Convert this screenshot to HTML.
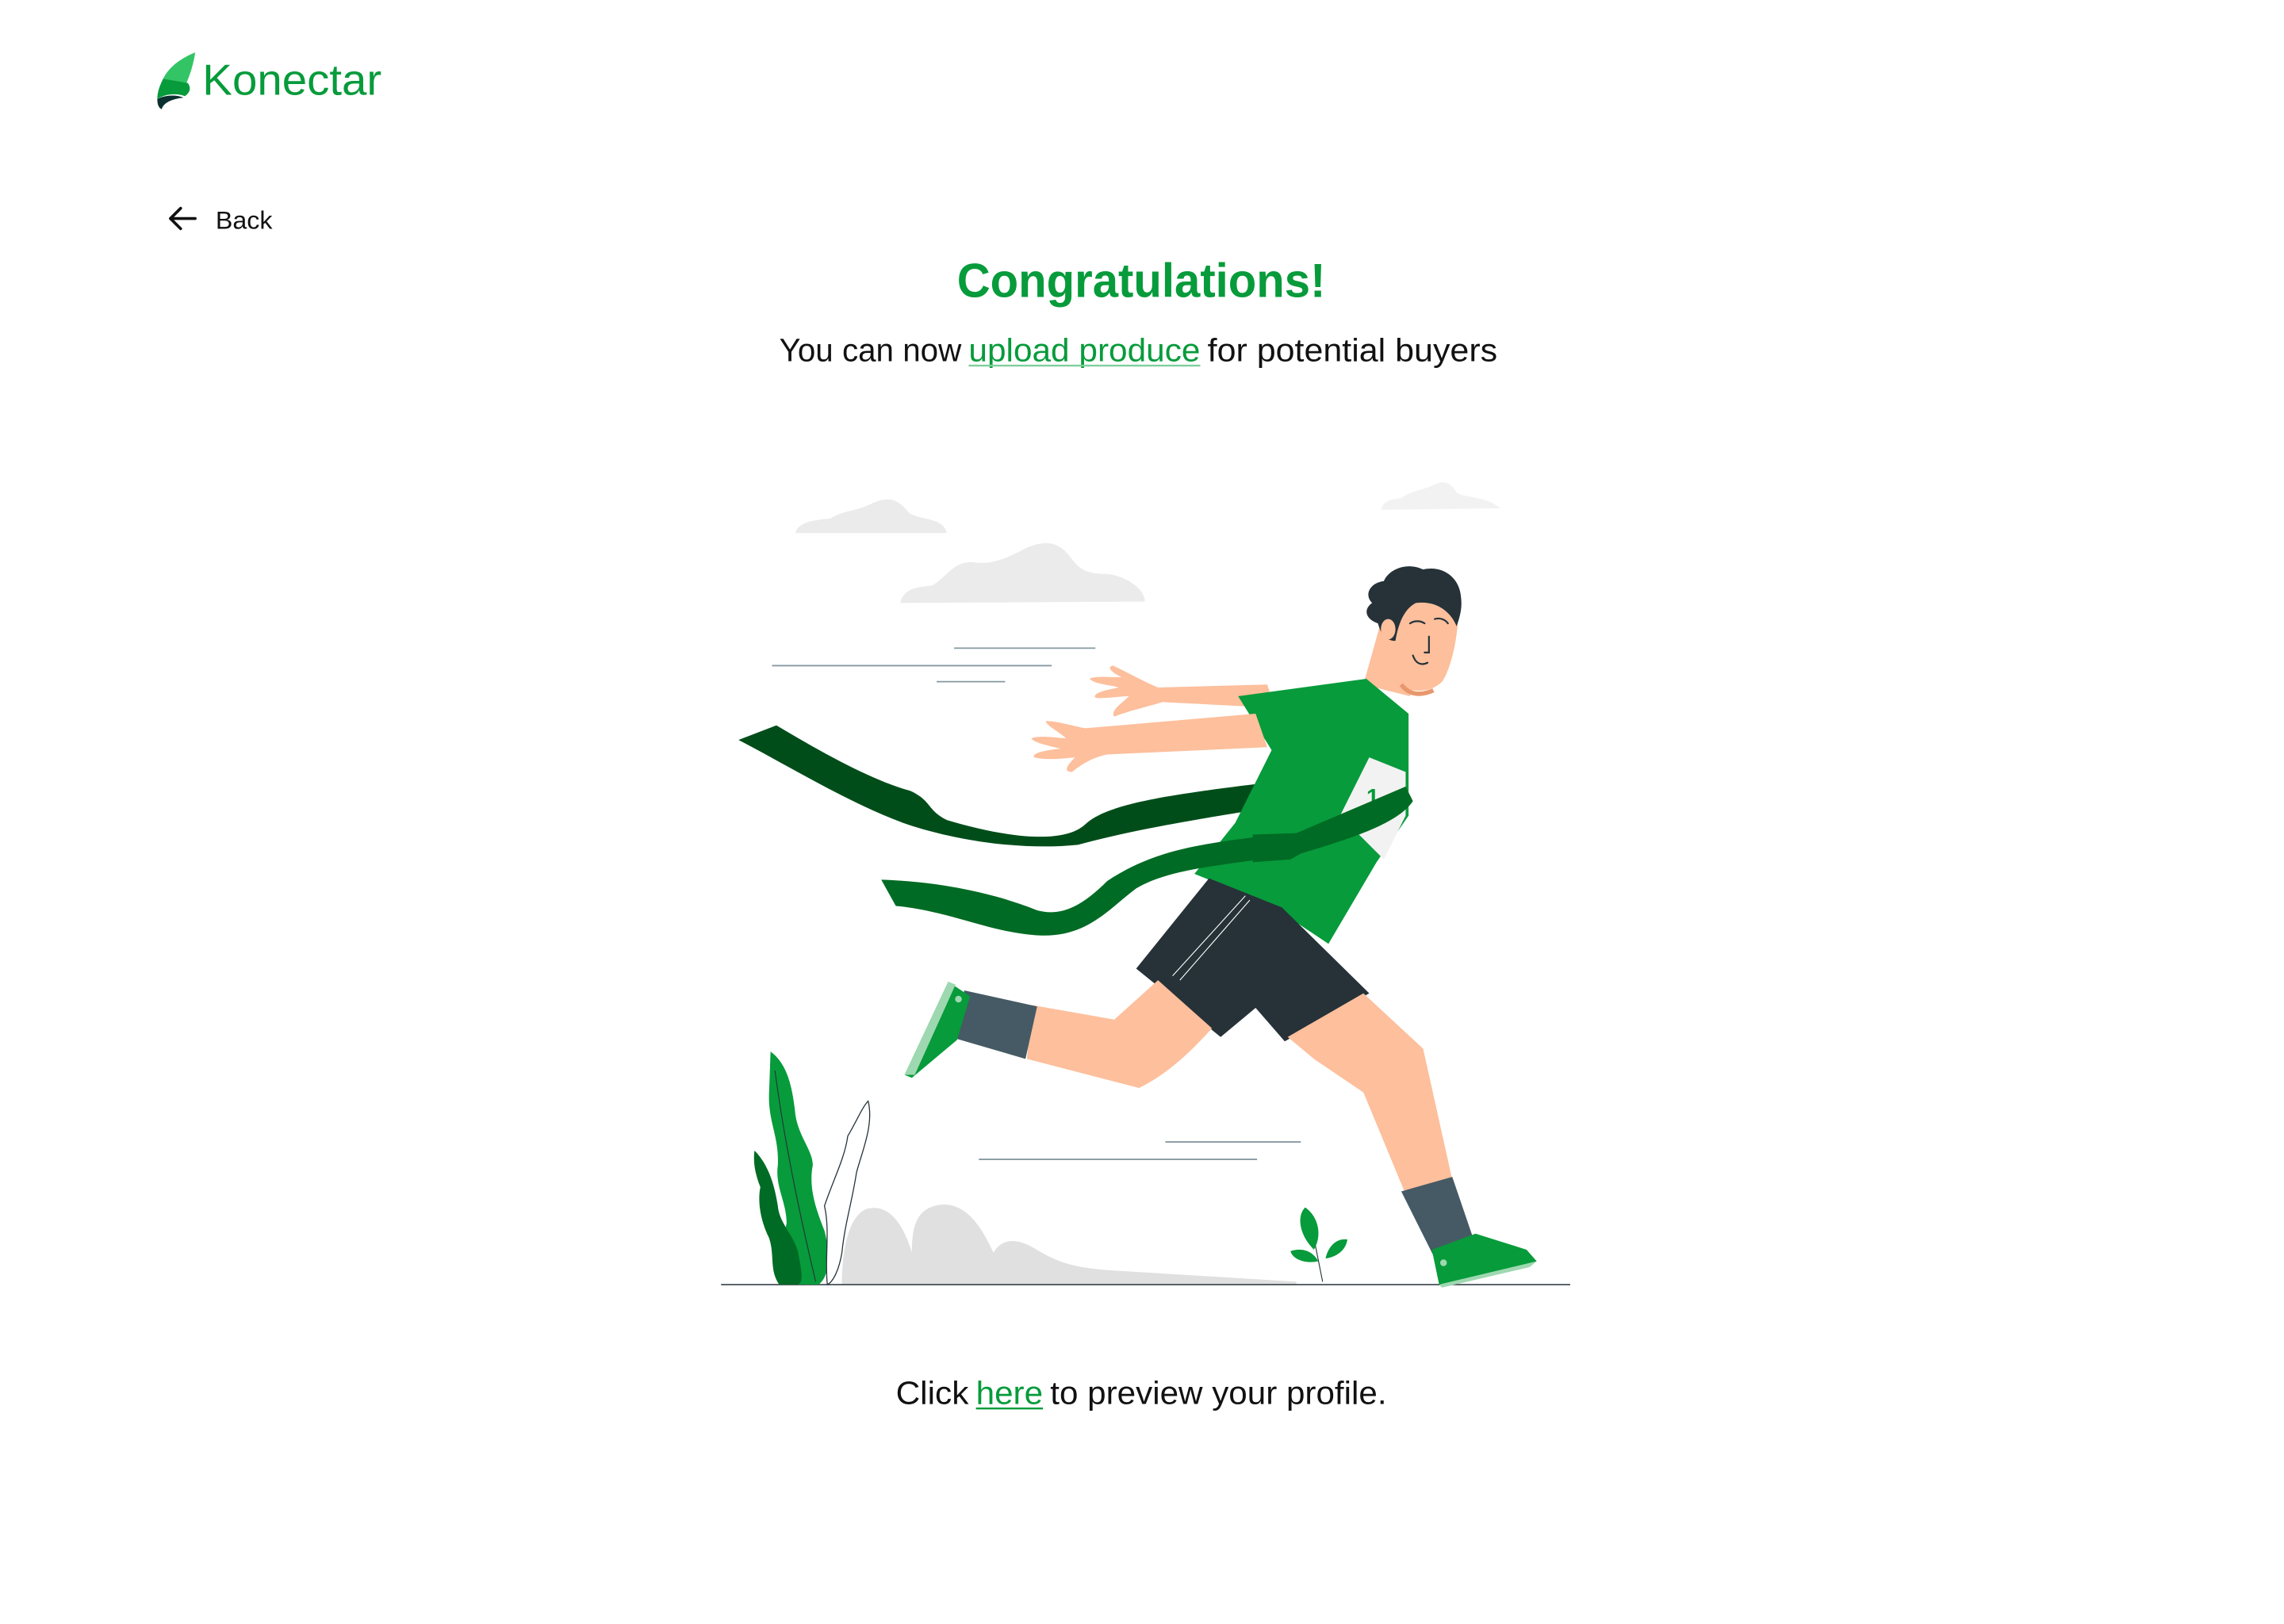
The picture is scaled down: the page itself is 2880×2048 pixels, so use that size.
<!DOCTYPE html>
<html><head><meta charset="utf-8"><style>
html,body{margin:0;padding:0;background:#fff;}
svg{display:block;}
</style></head><body>
<svg width="2880" height="2048" viewBox="0 0 1568 1115" xmlns="http://www.w3.org/2000/svg" font-family="Liberation Sans, sans-serif">
<!-- Logo -->
<path d="M134,36 C124,40 116,46 112,54 L128,57 C131,50 133,43 134,36Z" fill="#33c466"/>
<path d="M112,54 C109,60 108,64 108,68 C114,64 122,64 127,66 C131,63 131,60 129,57 Z" fill="#079b3b"/>
<path d="M108,68 C108,72 109,74 111,75 C112,71 117,68 126,67 C121,65 114,65 108,68Z" fill="#0b3030"/>
<text x="139" y="65" font-size="30" fill="#079b3b" textLength="123" lengthAdjust="spacingAndGlyphs">Konectar</text>
<!-- Back -->
<path d="M134,150 H117 M124,143 L117,150 L124,157" stroke="#111" stroke-width="2" fill="none" stroke-linecap="round" stroke-linejoin="round"/>
<text x="148" y="157" font-size="17" fill="#111" textLength="39" lengthAdjust="spacingAndGlyphs">Back</text>
<!-- Headings -->
<text x="657" y="204" font-size="33" font-weight="bold" fill="#079b3b" textLength="253" lengthAdjust="spacingAndGlyphs">Congratulations!</text>
<text x="535" y="248" font-size="22" fill="#111" textLength="125" lengthAdjust="spacingAndGlyphs">You can now</text>
<text x="665" y="248" font-size="22" fill="#079b3b" textLength="159" lengthAdjust="spacingAndGlyphs">upload produce</text>
<line x1="665" y1="251" x2="824" y2="251" stroke="#7fcf9c" stroke-width="1.3"/>
<text x="829" y="248" font-size="22" fill="#111" textLength="199" lengthAdjust="spacingAndGlyphs">for potential buyers</text>
<text x="615" y="964" font-size="22" fill="#111" textLength="50" lengthAdjust="spacingAndGlyphs">Click</text>
<text x="670" y="964" font-size="22" fill="#079b3b" textLength="46" lengthAdjust="spacingAndGlyphs">here</text>
<line x1="670" y1="967" x2="716" y2="967" stroke="#079b3b" stroke-width="1.3"/>
<text x="721" y="964" font-size="22" fill="#111" textLength="231" lengthAdjust="spacingAndGlyphs">to preview your profile.</text>

<!-- Clouds -->
<path d="M546,366 C548,358 560,357 570,356 C580,350 585,352 598,346 C610,340 617,343 624,352 C630,357 648,355 650,366Z" fill="#ebebeb"/>
<path d="M618,414 C620,404 630,403 640,402 C650,396 655,385 668,386 C680,388 690,384 705,376 C720,370 728,373 736,384 C742,392 748,394 760,394 C775,396 786,405 786,413Z" fill="#ebebeb"/>
<path d="M948,350 C950,343 956,343 962,342 C968,337 976,337 984,333 C992,329 996,332 1000,338 C1004,342 1020,340 1030,349Z" fill="#f2f2f2"/>
<!-- speed lines -->
<g stroke="#546e7a" stroke-width="1" opacity="0.7">
<line x1="655" y1="445" x2="752" y2="445"/><line x1="530" y1="457" x2="722" y2="457"/><line x1="643" y1="468" x2="690" y2="468"/>
<line x1="800" y1="784" x2="893" y2="784"/><line x1="672" y1="796" x2="863" y2="796"/></g>
<!-- ground -->
<path d="M578,882 C578,860 582,835 595,830 C610,826 620,840 626,860 C626,840 630,828 648,827 C665,827 675,845 682,860 C688,850 698,850 710,857 C725,866 735,870 760,872 L890,880 L890,882Z" fill="#e0e0e0"/>
<line x1="495" y1="882" x2="1078" y2="882" stroke="#263238" stroke-width="0.8"/>
<!-- left plant -->
<path d="M529,722 C540,730 544,745 546,765 C548,780 558,790 558,800 C555,815 560,830 566,845 C570,860 570,876 562,882 L548,882 C540,870 536,855 540,840 C540,825 532,815 534,800 C535,780 527,770 528,750 Z" fill="#079b3b"/>
<path d="M518,790 C528,800 532,815 534,828 C535,840 545,848 548,860 C550,872 552,880 548,882 L535,882 C528,872 532,862 528,850 C522,838 520,825 522,815 C518,805 517,797 518,790Z" fill="#006b24"/>
<path d="M532,735 C538,780 548,830 560,880" stroke="#263238" stroke-width="0.6" fill="none"/>
<path d="M596,756 C600,772 592,790 588,805 C585,825 580,840 578,860 C576,872 572,880 568,882 C566,865 570,845 566,828 C572,810 580,795 582,780 C588,770 592,760 596,756Z" fill="#fff" stroke="#263238" stroke-width="0.7"/>
<!-- right plant -->
<path d="M908,880 C905,865 902,850 900,840" stroke="#263238" stroke-width="0.6" fill="none"/>
<path d="M902,858 C892,848 890,835 896,829 C905,835 908,848 902,858Z" fill="#079b3b"/>
<path d="M905,866 C895,868 887,864 886,859 C895,856 902,860 905,866Z" fill="#079b3b"/>
<path d="M910,864 C912,855 918,850 925,851 C924,858 918,863 910,864Z" fill="#079b3b"/>
<!-- ribbon upper -->
<path d="M507,508 L533,498 C570,520 600,536 625,543 C640,550 636,556 650,563 C690,575 730,580 745,566 C760,552 800,546 865,538 L862,556 C800,566 770,572 740,580 C700,584 655,577 620,565 C580,550 540,525 507,508Z" fill="#004d1a"/>
<!-- back arm -->
<path d="M870,470 L795,472 C785,468 775,462 764,457 C760,458 762,461 770,465 C760,465 752,464 748,466 C752,470 762,470 768,472 C758,474 750,476 752,479 C758,480 768,478 775,478 C770,483 762,488 765,492 C775,488 785,486 798,482 L875,486Z" fill="#fdbf9c"/>
<!-- neck -->
<path d="M950,420 L980,440 L968,478 L936,470Z" fill="#fdbf9c"/>
<!-- shirt -->
<path d="M850,478 L938,466 L967,490 L967,560 L945,592 L912,648 L870,620 L820,600 L848,565 L873,515Z" fill="#079b3b"/>
<path d="M940,520 L965,530 L965,560 L950,590 L920,560Z" fill="#f2f2f2"/>
<text x="938" y="553" font-size="16" font-weight="bold" fill="#079b3b">1</text>
<!-- front arm -->
<path d="M870,513 L760,518 C750,520 742,525 736,530 C730,530 732,526 738,520 C728,521 718,522 710,520 C708,517 718,515 728,514 C720,512 710,510 708,507 C712,505 722,506 732,507 C728,503 718,498 718,495 C725,495 735,498 745,500 L862,490Z" fill="#fdbf9c"/>
<!-- head -->
<path d="M954,408 C966,400 990,402 1001,415 C1002,432 997,458 990,468 C982,476 968,476 960,470 C952,462 947,445 950,428Z" fill="#fdbf9c"/>
<path d="M962,470 C967,477 975,478 984,474" stroke="#e8976c" stroke-width="3" fill="none"/>
<path d="M946,428 C937,425 936,418 942,414 C936,408 941,400 950,399 C954,390 967,386 977,391 C990,388 1002,396 1003,410 C1004,418 1002,424 1000,430 C996,420 986,412 972,414 C964,418 960,428 958,440 C952,440 948,436 946,428Z" fill="#263238"/>
<ellipse cx="953" cy="432" rx="5" ry="7" fill="#fdbf9c"/>
<path d="M968,428 C971,426 975,426 978,428 M985,425 C988,424 992,425 994,428 M981,437 L981,448 L978,448 M970,450 C972,456 976,457 980,455" stroke="#263238" stroke-width="1.2" fill="none" stroke-linecap="round"/>
<!-- ribbon lower -->
<path d="M605,604 C640,605 680,612 712,625 C730,630 745,620 760,605 C790,585 820,580 860,575 L865,590 C830,595 800,598 780,610 C760,625 745,645 710,642 C680,640 650,625 615,622 Z" fill="#006b24"/>
<path d="M860,573 L890,572 L965,540 L970,550 C960,565 930,575 893,586 L886,590 L860,592Z" fill="#006b24"/>
<!-- shorts -->
<path d="M830,603 L880,623 L940,682 L882,715 L862,692 L838,712 L780,665Z" fill="#263238"/>
<path d="M805,670 L855,615 M810,673 L858,618" stroke="#fff" stroke-width="0.6"/>
<!-- back leg -->
<path d="M795,673 L832,706 C815,725 800,738 782,747 L705,727 L708,690 L765,700Z" fill="#fdbf9c"/>
<path d="M662,680 L712,691 L704,727 L656,713Z" fill="#455a64"/>
<path d="M651,674 L666,684 L657,714 L626,740 L621,738Z" fill="#079b3b"/>
<path d="M651,674 L656,676 L628,738 L621,738Z" fill="#9ed8b0"/>
<circle cx="658" cy="686" r="2.3" fill="#9ed8b0"/>
<!-- front leg -->
<path d="M884,712 L936,682 L977,720 L997,810 L965,820 L936,750 L902,727Z" fill="#fdbf9c"/>
<path d="M962,818 L997,808 L1012,852 L984,862Z" fill="#455a64"/>
<path d="M983,858 L1013,847 L1048,858 L1055,866 L988,882Z" fill="#079b3b"/>
<path d="M988,882 L1055,866 L1050,870 L990,884Z" fill="#9ed8b0"/>
<circle cx="991" cy="867" r="2.3" fill="#9ed8b0"/>
</svg>
</body></html>
